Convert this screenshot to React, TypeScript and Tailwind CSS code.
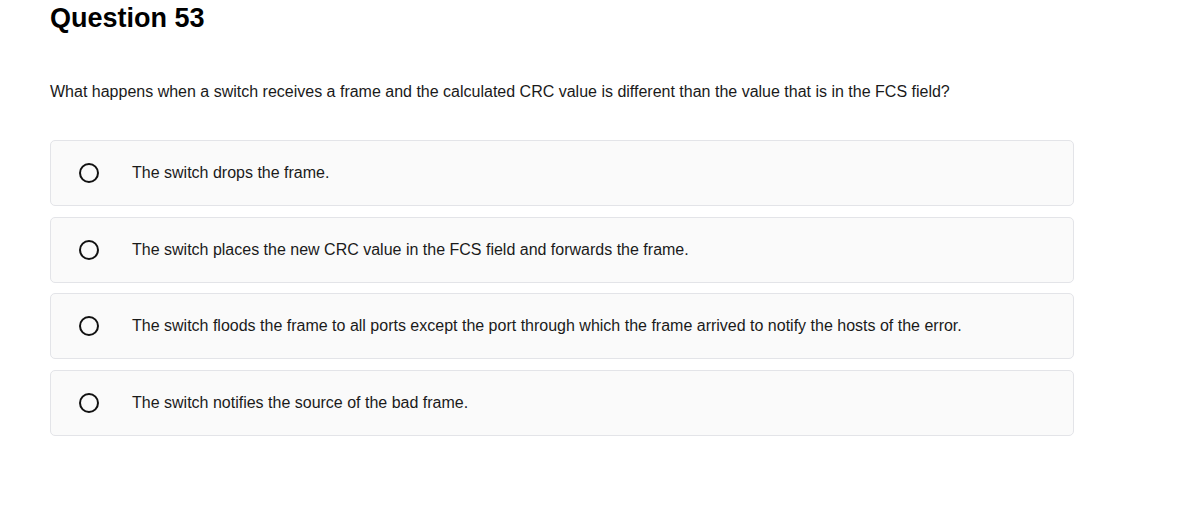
import React from "react";

const options = [
  "The switch drops the frame.",
  "The switch places the new CRC value in the FCS field and forwards the frame.",
  "The switch floods the frame to all ports except the port through which the frame arrived to notify the hosts of the error.",
  "The switch notifies the source of the bad frame.",
];

export default function App() {
  return (
    <div className="w-[1197px] h-[512px] bg-white pl-[50px] pt-[2px] font-['Liberation_Sans',Arial,sans-serif] text-[#1a1a1a]">
      <h1 className="text-[27px] leading-[32px] font-bold text-black">Question 53</h1>
      <p className="mt-[49px] text-[16px] leading-[18px]">
        What happens when a switch receives a frame and the calculated CRC value is different than the value that is in the FCS field?
      </p>
      <div className="mt-[39px] w-[1024px] flex flex-col gap-[10.7px]">
        {options.map((o) => (
          <div
            key={o}
            className="h-[66px] flex items-center rounded-[5px] border border-[#e3e4e8] bg-[#fafafa]"
          >
            <span className="ml-[28px] w-[20px] h-[20px] rounded-full border-2 border-[#111]" />
            <span className="ml-[33px] text-[16px] leading-[18px]">{o}</span>
          </div>
        ))}
      </div>
    </div>
  );
}
